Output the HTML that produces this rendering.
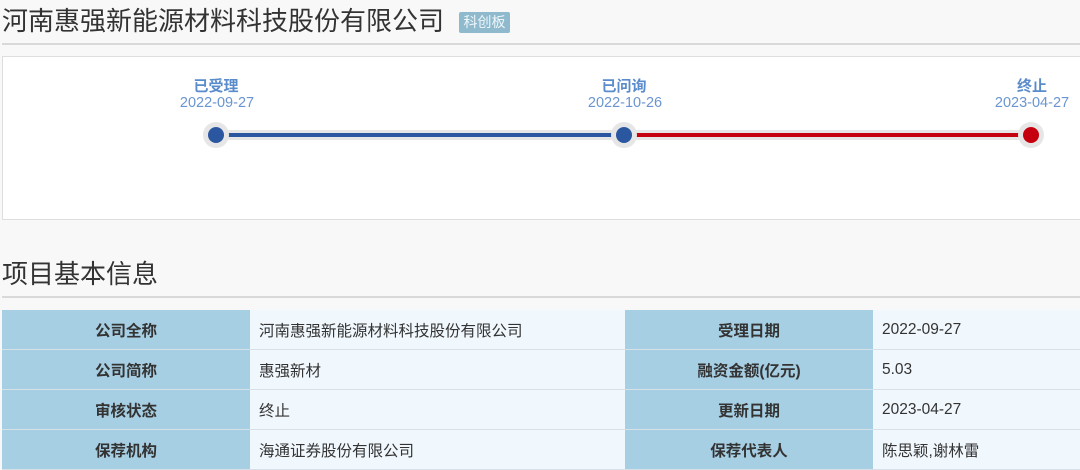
<!DOCTYPE html>
<html><head><meta charset="utf-8"><style>
body{margin:0;width:1080px;height:467px;overflow:hidden;background:#f8f8f8;font-family:"Liberation Sans","Noto Sans CJK SC",sans-serif;position:relative;color:#333}
.a{position:absolute}
h1{position:absolute;left:2px;top:3px;margin:0;font-weight:normal;font-size:26px;color:#333;line-height:36px;white-space:nowrap}
.tag{position:absolute;left:459px;top:12px;width:51px;height:21px;background:#8fbacd;color:#eef6fa;font-size:14px;line-height:21px;text-align:center;border-radius:2px}
.hr{position:absolute;left:2px;right:0;height:2px;background:#d9d9d9}
.box{position:absolute;left:2px;top:56px;width:1080px;height:162px;background:#fff;border:1px solid #dedede}
.lbl{position:absolute;font-size:15px;font-weight:bold;color:#5a8ccc;text-align:center;width:120px}
.dt{position:absolute;font-size:14.5px;color:#6a95d0;text-align:center;width:120px}
table{position:absolute;left:2px;top:310px;border-collapse:collapse;width:1078px}
td{height:39px;border-bottom:1px solid #d6e0e7;font-size:15.5px;padding:0}
td.k{background:#a7cfe4;font-weight:bold;text-align:center;color:#333;width:248px}
td.v{background:#f0f7fd;padding-left:9px;color:#333}
</style></head><body>
<h1>河南惠强新能源材料科技股份有限公司</h1>
<div class="tag">科创板</div>
<div class="hr" style="top:43px"></div>
<div class="box"></div>
<div class="lbl" style="left:156px;top:75px">已受理</div>
<div class="dt" style="left:157px;top:95px">2022-09-27</div>
<div class="lbl" style="left:564px;top:75px">已问询</div>
<div class="dt" style="left:565px;top:95px">2022-10-26</div>
<div class="lbl" style="left:972px;top:75px">终止</div>
<div class="dt" style="left:972px;top:95px">2023-04-27</div>
<svg class="a" style="left:0;top:115px" width="1080" height="40">
<line x1="216" y1="20" x2="1031" y2="20" stroke="#e6e6e6" stroke-width="10"/>
<line x1="216" y1="20" x2="624" y2="20" stroke="#2b56a0" stroke-width="4"/>
<line x1="624" y1="20" x2="1031" y2="20" stroke="#c5000f" stroke-width="4"/>
<circle cx="216" cy="20" r="13" fill="#e6e6e6"/><circle cx="216" cy="20" r="8" fill="#2b56a0"/>
<circle cx="624" cy="20" r="13" fill="#e6e6e6"/><circle cx="624" cy="20" r="8" fill="#2b56a0"/>
<circle cx="1031" cy="20" r="13" fill="#e6e6e6"/><circle cx="1031" cy="20" r="8" fill="#c5000f"/>
</svg>
<div class="a" style="left:2px;top:256px;font-size:26px;line-height:36px;color:#333">项目基本信息</div>
<div class="hr" style="top:296px"></div>
<table>
<tr><td class="k">公司全称</td><td class="v" style="width:366px">河南惠强新能源材料科技股份有限公司</td><td class="k">受理日期</td><td class="v">2022-09-27</td></tr>
<tr><td class="k">公司简称</td><td class="v">惠强新材</td><td class="k">融资金额(亿元)</td><td class="v">5.03</td></tr>
<tr><td class="k">审核状态</td><td class="v">终止</td><td class="k">更新日期</td><td class="v">2023-04-27</td></tr>
<tr><td class="k">保荐机构</td><td class="v">海通证券股份有限公司</td><td class="k">保荐代表人</td><td class="v">陈思颖,谢林雷</td></tr>
</table>
</body></html>
